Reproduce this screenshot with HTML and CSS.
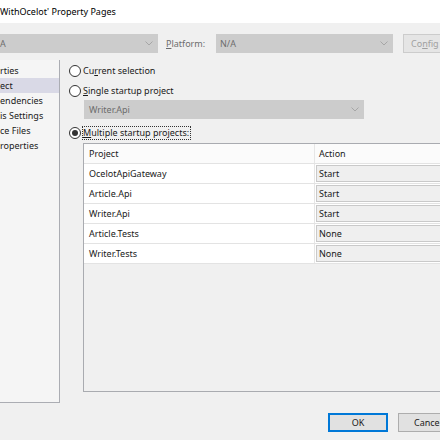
FILE: index.html
```html
<!DOCTYPE html>
<html>
<head>
<meta charset="utf-8">
<link rel="stylesheet" href="styles.css">
</head>
<body>
<div class="window">
  <div class="titlebar">WithOcelot' Property Pages</div>
  <div class="toolbar">
    <div class="combo combo-config"><span class="combo-text">A</span><svg class="chev" width="8" height="5" viewBox="0 0 8 5"><polyline points="0.5,0.5 4,4 7.5,0.5" fill="none" stroke="#a6a6a6" stroke-width="1"/></svg></div>
    <span class="label-disabled"><u>P</u>latform:</span>
    <div class="combo combo-platform"><span class="combo-text dark">N/A</span><svg class="chev" width="8" height="5" viewBox="0 0 8 5"><polyline points="0.5,0.5 4,4 7.5,0.5" fill="none" stroke="#a6a6a6" stroke-width="1"/></svg></div>
    <div class="btn btn-config">Co<u>n</u>fig</div>
  </div>
  <div class="main">
    <div class="tree">
      <div class="item">rties</div>
      <div class="item selected">ect</div>
      <div class="item">endencies</div>
      <div class="item">is Settings</div>
      <div class="item">ce Files</div>
      <div class="item">roperties</div>
    </div>
    <div class="content">
      <div class="radio radio-first"><span class="circle"></span><span class="rlabel">Cu<u>r</u>rent selection</span></div>
      <div class="radio radio-second"><span class="circle"></span><span class="rlabel"><u>S</u>ingle startup project</span></div>
      <div class="combo combo-single"><span class="combo-text">Writer.Api</span><svg class="chev" width="8" height="5" viewBox="0 0 8 5"><polyline points="0.5,0.5 4,4 7.5,0.5" fill="none" stroke="#a6a6a6" stroke-width="1"/></svg></div>
      <div class="radio radio-third"><span class="circle checked"></span><span class="rlabel focus"><u>M</u>ultiple startup projects:</span></div>
      <div class="grid">
        <div class="grow ghead"><div class="c1">Project</div><div class="c2 hc2">Action</div></div>
        <div class="grow"><div class="c1">OcelotApiGateway</div><div class="c2"><div class="abox">Start</div></div></div>
        <div class="grow"><div class="c1">Article.Api</div><div class="c2"><div class="abox">Start</div></div></div>
        <div class="grow"><div class="c1">Writer.Api</div><div class="c2"><div class="abox">Start</div></div></div>
        <div class="grow"><div class="c1">Article.Tests</div><div class="c2"><div class="abox">None</div></div></div>
        <div class="grow"><div class="c1">Writer.Tests</div><div class="c2"><div class="abox">None</div></div></div>
      </div>
    </div>
  </div>
  <div class="footer">
    <div class="btn btn-ok">OK</div>
    <div class="btn btn-cancel">Cancel</div>
  </div>
</div>
</body>
</html>
```
FILE: styles.css
```css
* { box-sizing: border-box; }
html, body {
  margin: 0;
  padding: 0;
  width: 440px;
  height: 440px;
  overflow: hidden;
  background: #f0f0f0;
}
body {
  font-family: "Noto Sans", "Open Sans", sans-serif;
  font-size: 9px;
  color: #1a1a1a;
}
.window {
  width: 440px;
  height: 440px;
  overflow: hidden;
}
.titlebar {
  height: 23px;
  background: #ffffff;
  line-height: 23px;
  font-size: 9px;
  color: #000;
  white-space: nowrap;
}
.toolbar {
  display: flex;
  align-items: center;
  margin-top: 11px;
  height: 19px;
  white-space: nowrap;
}
.combo {
  height: 19px;
  background: #cccccc;
  display: flex;
  align-items: center;
  justify-content: space-between;
  padding: 0 5px 0 4px;
  color: #6d6d6d;
  flex: none;
}
.combo-text.dark { color: #6d6d6d; }
.chev { flex: none; }
.combo-config {
  width: 158px;
  padding-left: 0;
}
.label-disabled {
  margin-left: 8px;
  color: #6d6d6d;
  width: 50px;
  flex: none;
}
.combo-platform {
  width: 177px;
}
.btn {
  height: 19px;
  background: #e1e1e1;
  border: 1px solid #adadad;
  display: flex;
  align-items: center;
  justify-content: center;
  flex: none;
  white-space: nowrap;
}
.btn-config {
  margin-left: 10px;
  width: 110px;
  justify-content: flex-start;
  padding-left: 7px;
  color: #a0a0a0;
  border-color: #cccccc;
  background: #e5e5e5;
}
.main {
  display: flex;
  margin-top: 7px;
  height: 343px;
}
.tree {
  width: 60px;
  height: 343px;
  background: #f5f5f5;
  border-right: 1px solid #abadb3;
  border-bottom: 1px solid #abadb3;
  padding-top: 3px;
  flex: none;
  overflow: hidden;
}
.item {
  height: 15px;
  line-height: 15px;
  white-space: nowrap;
  color: #1a1a1a;
}
.item.selected {
  background: #d9d9e6;
}
.content {
  flex: 1;
  padding-left: 9px;
  min-width: 0;
}
.radio {
  display: flex;
  align-items: center;
  height: 14px;
  white-space: nowrap;
}
.radio-first { margin-top: 4px; }
.radio-second { margin-top: 6px; }
.radio-third { margin-top: 7px; }
.circle {
  width: 12px;
  height: 12px;
  border: 1px solid #333333;
  border-radius: 50%;
  background: #ffffff;
  flex: none;
  display: flex;
  align-items: center;
  justify-content: center;
}
.circle.checked::after {
  content: "";
  width: 6px;
  height: 6px;
  border-radius: 50%;
  background: #333333;
}
.rlabel {
  margin-left: 2px;
  line-height: 12px;
}
.focus {
  outline: 1px dotted #333333;
  outline-offset: 0;
  padding-right: 1px;
}
.combo-single {
  margin-top: 2px;
  margin-left: 15px;
  width: 280px;
  padding-left: 5px;
}
.grid {
  margin-top: 3px;
  margin-left: 14px;
  width: 380px;
  height: 249px;
  border: 1px solid #a9abb0;
  background: #f0f0f0;
}
.grow {
  display: flex;
  height: 20px;
  background: #ffffff;
  border-bottom: 1px solid #e3e3e3;
}
.ghead {
  background: #fbfbfb;
}
.c1 {
  width: 231px;
  padding-left: 5px;
  display: flex;
  align-items: center;
  border-right: 1px solid #e6e6e6;
  flex: none;
}
.c2 {
  flex: 1;
  display: flex;
  align-items: center;
  padding-left: 1px;
}
.hc2 { padding-left: 4px; }
.abox {
  width: 100%;
  height: 17px;
  background: #efefef;
  border: 1px solid #c9c9c9;
  display: flex;
  align-items: center;
  padding-left: 2px;
}
.footer {
  display: flex;
  margin-top: 10px;
  padding-left: 328px;
}
.btn-ok {
  width: 60px;
  border: 2px solid #0078d7;
  color: #1a1a1a;
}
.btn-cancel {
  width: 60px;
  margin-left: 10px;
  color: #1a1a1a;
}
```
